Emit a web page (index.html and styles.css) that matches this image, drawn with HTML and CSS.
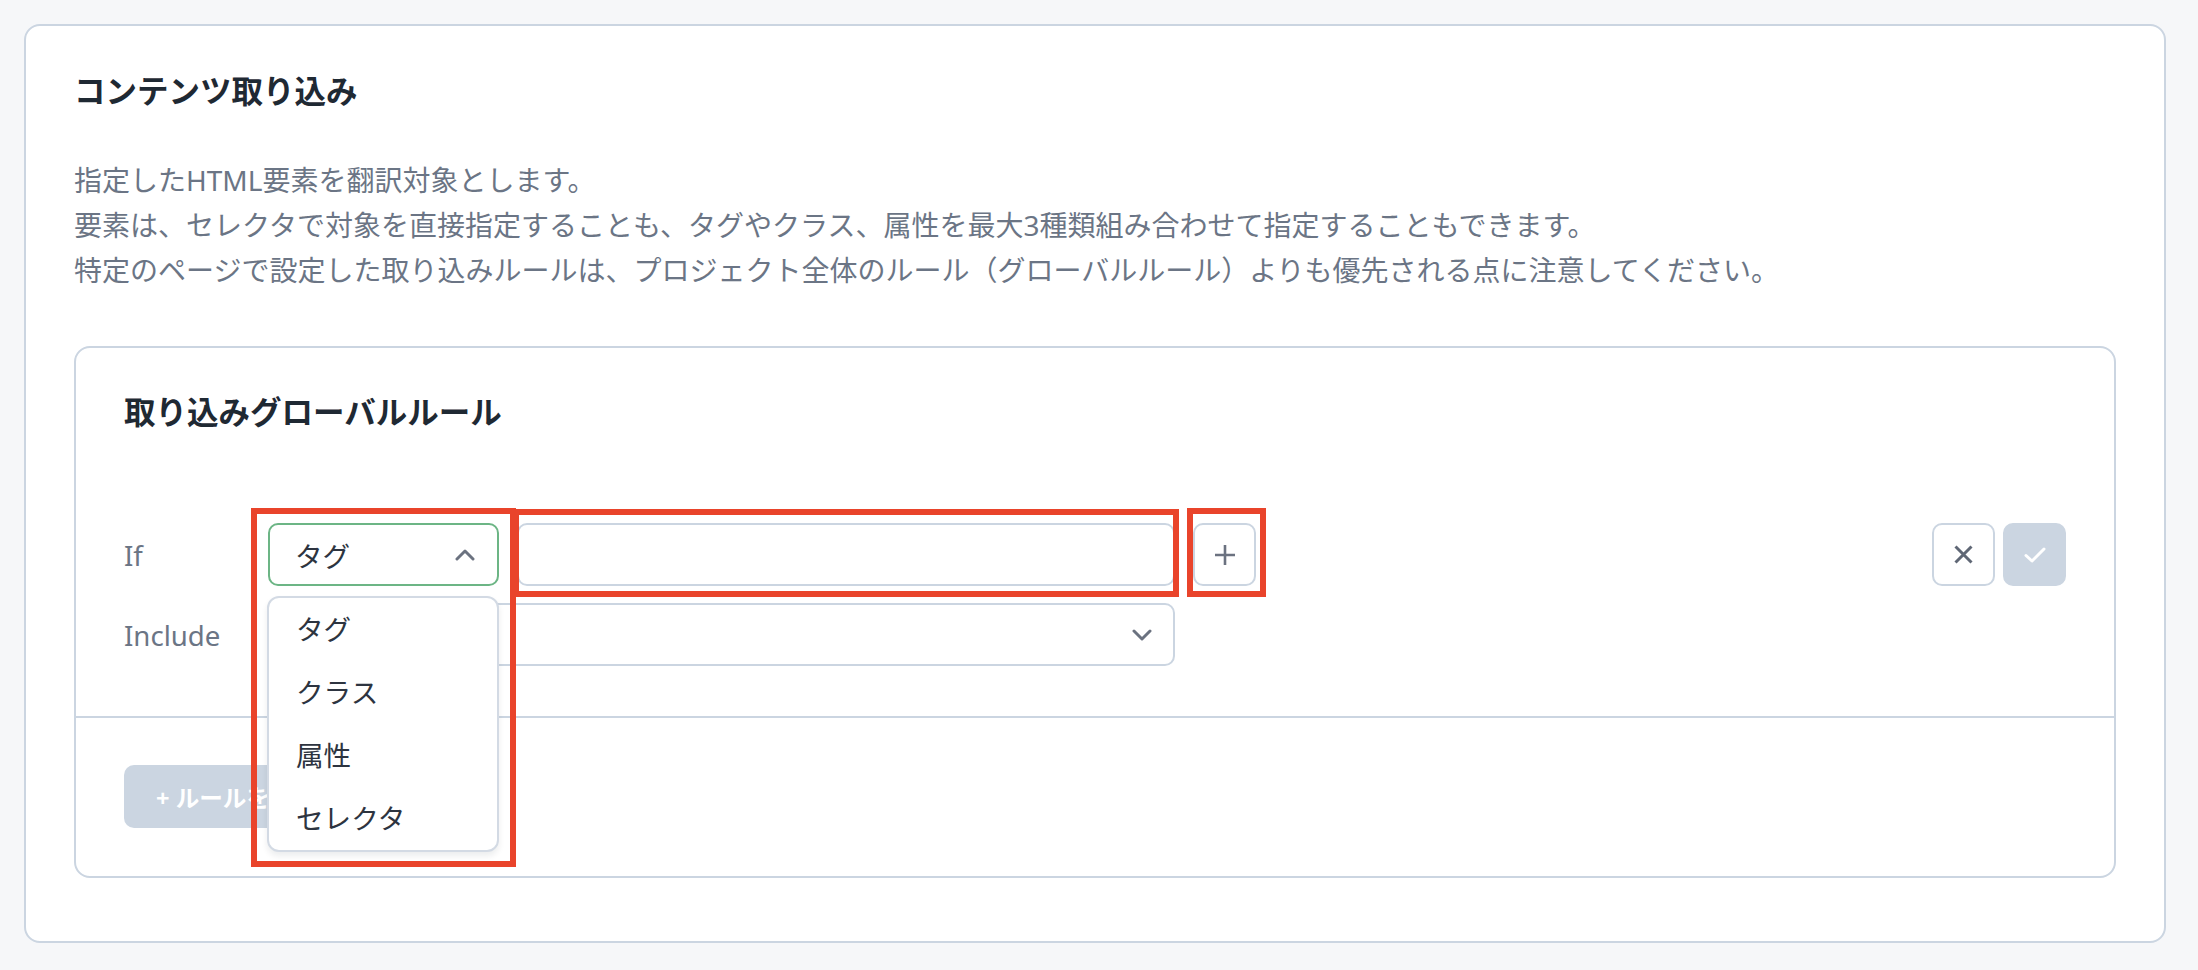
FILE: index.html
```html
<!DOCTYPE html>
<html lang="ja">
<head>
  <meta charset="UTF-8" />
  <meta name="viewport" content="width=device-width, initial-scale=1.0" />
  <title>コンテンツ取り込み</title>
  <link rel="stylesheet" href="styles.css">
</head>
<body>
  <section class="panel">
    <h2 class="panel-title">コンテンツ取り込み</h2>
    <p class="panel-desc">
      指定したHTML要素を翻訳対象とします。<br>
      要素は、セレクタで対象を直接指定することも、タグやクラス、属性を最大3種類組み合わせて指定することもできます。<br>
      特定のページで設定した取り込みルールは、プロジェクト全体のルール（グローバルルール）よりも優先される点に注意してください。
    </p>

    <div class="rule-card">
      <h3 class="rule-title">取り込みグローバルルール</h3>

      <div class="rule-body">
        <div class="rule-row">
          <span class="rule-label">If</span>

          <div class="select-wrap">
            <div class="select is-open">
              <span>タグ</span>
              <svg width="20" height="12" viewBox="0 0 20 12"><path d="M2 10 L10 2 L18 10" fill="none" stroke="#6b7280" stroke-width="3" stroke-linecap="round" stroke-linejoin="round"/></svg>
            </div>
            <ul class="select-menu">
              <li>タグ</li>
              <li>クラス</li>
              <li>属性</li>
              <li>セレクタ</li>
            </ul>
            <span class="mark mark-select"></span>
          </div>

          <div class="input-wrap">
            <input class="text-input" type="text" />
            <span class="mark mark-input"></span>
          </div>

          <div class="btn-wrap">
            <button class="icon-btn">
              <svg width="22" height="22" viewBox="0 0 22 22"><path d="M11 1 V21 M1 11 H21" fill="none" stroke="#6b7280" stroke-width="2.6"/></svg>
            </button>
            <span class="mark mark-add"></span>
          </div>

          <div class="row-actions">
            <button class="icon-btn">
              <svg width="19" height="19" viewBox="0 0 19 19"><path d="M1.5 1.5 L17.5 17.5 M17.5 1.5 L1.5 17.5" fill="none" stroke="#5f6775" stroke-width="3"/></svg>
            </button>
            <button class="icon-btn is-confirm">
              <svg width="22" height="16" viewBox="0 0 22 16"><path d="M2 8.5 L8 14 L20 2" fill="none" stroke="#fff" stroke-width="3" stroke-linecap="round" stroke-linejoin="round"/></svg>
            </button>
          </div>
        </div>

        <div class="rule-row">
          <span class="rule-label">Include</span>
          <div class="select select-wide">
            <span></span>
            <svg width="20" height="12" viewBox="0 0 20 12"><path d="M2 2 L10 10 L18 2" fill="none" stroke="#6b7280" stroke-width="3" stroke-linecap="round" stroke-linejoin="round"/></svg>
          </div>
        </div>
      </div>

      <div class="rule-foot">
        <button class="add-btn">+ ルールを追加</button>
      </div>
    </div>
  </section>
</body>
</html>
```

FILE: styles.css
```css
body {
  margin: 0;
  padding: 24px 32px 25px 24px;
  background: #f6f7f9;
  font-family: "Noto Sans", "Noto Sans CJK JP", sans-serif;
  color: #2d3440;
}
.panel {
  background: #fff;
  border: 2px solid #cbd5e1;
  border-radius: 16px;
  padding: 41px 48px 63px;
}
.panel-title, .rule-title {
  margin: 0;
  font-size: 31.5px;
  line-height: 47px;
  font-weight: 700;
  color: #1f2933;
}
.panel-desc {
  margin: 44px 0 0;
  font-size: 28px;
  line-height: 45px;
  color: #6b7585;
}
.rule-card {
  margin-top: 53px;
  border: 2px solid #cbd5e1;
  border-radius: 16px;
}
.rule-title {
  padding: 40px 48px 0;
}
.rule-body {
  display: flex;
  flex-direction: column;
  gap: 17px;
  padding: 88px 48px 50px;
}
.rule-row {
  display: flex;
  align-items: center;
  gap: 18px;
  height: 63px;
}
.rule-label {
  width: 126px;
  flex: none;
  font-size: 27.6px;
  color: #6b7585;
}
.select-wrap, .input-wrap, .btn-wrap {
  position: relative;
  flex: none;
}
.select {
  box-sizing: border-box;
  display: flex;
  align-items: center;
  justify-content: space-between;
  width: 231px;
  height: 63px;
  padding: 0 22px 0 25px;
  border: 2px solid #cbd5e1;
  border-radius: 10px;
  background: #fff;
  font-size: 27.6px;
}
.select.is-open {
  border-color: #6cb585;
}
.select-wide {
  width: 907px;
  padding-right: 21px;
}
.select-menu {
  position: absolute;
  top: 73px;
  left: -1px;
  z-index: 5;
  box-sizing: border-box;
  width: 232px;
  margin: 0;
  padding: 0;
  list-style: none;
  background: #fff;
  border: 2px solid #d3dae4;
  border-radius: 12px;
  box-shadow: 0 4px 6px rgba(15, 23, 42, 0.08);
}
.select-menu li {
  height: 63px;
  line-height: 63px;
  padding-left: 27px;
  font-size: 27.6px;
}
.text-input {
  display: block;
  box-sizing: border-box;
  width: 658px;
  height: 63px;
  border: 2px solid #cbd5e1;
  border-radius: 10px;
  background: #fff;
}
.icon-btn {
  box-sizing: border-box;
  display: grid;
  place-items: center;
  width: 63px;
  height: 63px;
  padding: 0;
  border: 2px solid #cbd5e1;
  border-radius: 10px;
  background: #fff;
}
.icon-btn.is-confirm {
  background: #cbd5e1;
}
.row-actions {
  display: flex;
  gap: 8px;
  margin-left: auto;
}
.rule-foot {
  border-top: 2px solid #cbd5e1;
  padding: 47px 48px 48px;
}
.add-btn {
  height: 63px;
  padding: 0 32px;
  border: none;
  border-radius: 10px;
  background: #cbd5e1;
  color: #fff;
  font-family: inherit;
  font-size: 23.6px;
  font-weight: 700;
}

/* annotation frames */
.mark {
  position: absolute;
  z-index: 10;
  box-sizing: border-box;
  border: 6px solid #e9442b;
  pointer-events: none;
}
.mark-select {
  left: -17px;
  top: -15px;
  width: 265px;
  height: 359px;
}
.mark-input {
  left: -4px;
  top: -14px;
  width: 666px;
  height: 88px;
}
.mark-add {
  left: -6px;
  top: -15px;
  width: 79px;
  height: 89px;
}
```
